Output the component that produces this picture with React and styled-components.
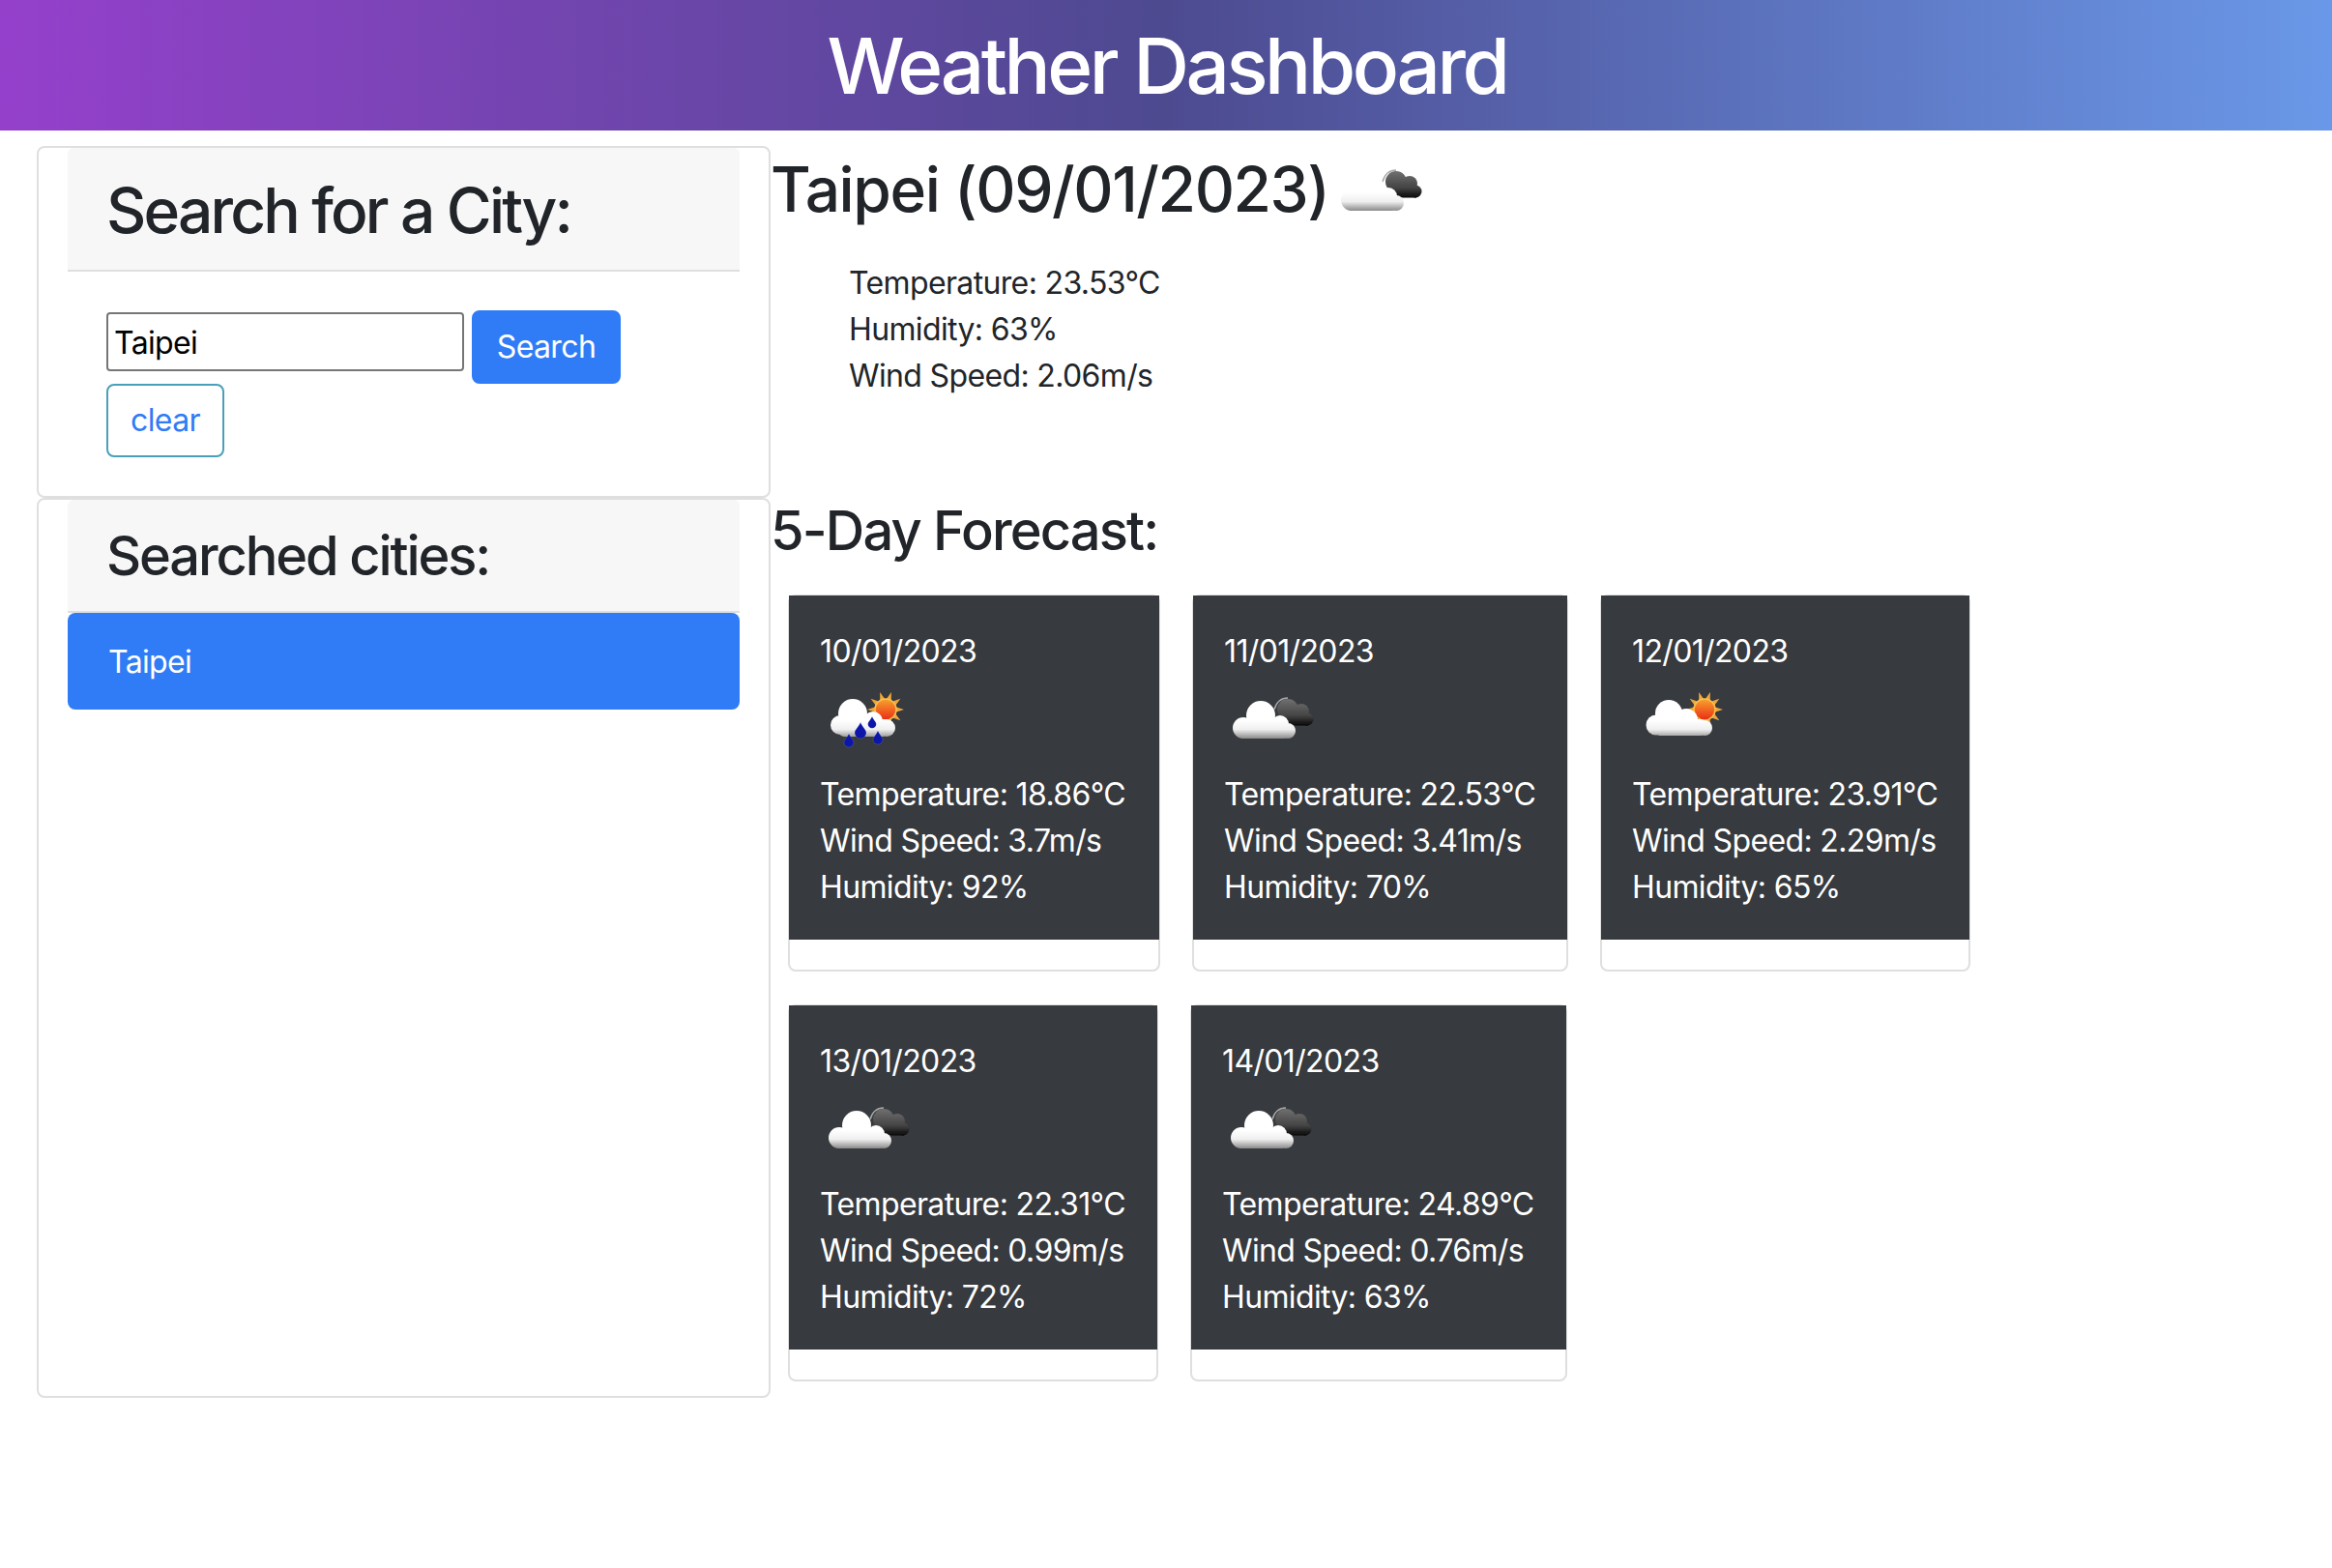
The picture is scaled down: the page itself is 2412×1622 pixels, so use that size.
import React from 'react'
import styled, { createGlobalStyle } from 'styled-components'

const FORECAST = [
  { date: '10/01/2023', icon: 'rain', temp: '18.86', wind: '3.7', humidity: 92, width: 385 },
  { date: '11/01/2023', icon: 'broken', temp: '22.53', wind: '3.41', humidity: 70, width: 389 },
  { date: '12/01/2023', icon: 'sun', temp: '23.91', wind: '2.29', humidity: 65, width: 383 },
  { date: '13/01/2023', icon: 'broken', temp: '22.31', wind: '0.99', humidity: 72, width: 383 },
  { date: '14/01/2023', icon: 'broken', temp: '24.89', wind: '0.76', humidity: 63, width: 390 },
]

const GlobalStyle = createGlobalStyle`
  * { box-sizing: border-box; }
  body {
    margin: 0;
    background: #ffffff;
    color: #212529;
    font-family: Inter, "Liberation Sans", sans-serif;
    font-size: 32px;
    line-height: 48px;
    letter-spacing: -0.02em;
  }
`

const Banner = styled.header`
  height: 135px;
  display: flex;
  align-items: center;
  justify-content: center;
  background: linear-gradient(to right, #9540cc 0%, #4d4a90 50%, #6a98e8 100%);
`

const BannerTitle = styled.h1`
  margin: 0 0 0 2px;
  font-size: 80px;
  line-height: 96px;
  font-weight: 500;
  letter-spacing: -0.043em;
  color: #ffffff;
`

const Layout = styled.main`
  display: flex;
  align-items: flex-start;
`

const Sidebar = styled.aside`
  width: 759px;
  margin: 16px 0 0 38px;
  flex-shrink: 0;
`

const Panel = styled.section`
  border: 2px solid #dfdfdf;
  border-radius: 8px;
  padding: 0 30px;
  min-height: ${({ $minHeight }) => $minHeight || 0}px;
`

const PanelHead = styled.div`
  background: #f7f7f7;
  border-bottom: 2px solid #dfdfdf;
  border-radius: 6px 6px 0 0;
  padding: ${({ $pad }) => $pad}px 40px 0;
  height: ${({ $height }) => $height}px;
`

const PanelTitle = styled.h2`
  margin: 0;
  font-size: ${({ $size }) => $size}px;
  line-height: 1.2;
  font-weight: 550;
  letter-spacing: ${({ $spacing }) => $spacing}em;
`

const SearchForm = styled.form`
  padding: 40px;
`

const CityInput = styled.input`
  width: 370px;
  height: 61px;
  padding: 4px 6px 2px;
  border: 2px solid #767676;
  border-radius: 4px;
  background: #ffffff;
  color: #000000;
  font: 400 32px Inter, "Liberation Sans", sans-serif;
  letter-spacing: -0.02em;
  vertical-align: 4px;
`

const Button = styled.button`
  height: 76px;
  width: ${({ $outline }) => ($outline ? 122 : 154)}px;
  padding: 12px 0;
  border-radius: 8px;
  border: 2px solid ${({ $outline }) => ($outline ? '#4a9fba' : '#2f7cf6')};
  margin-left: ${({ $outline }) => ($outline ? 0 : 8)}px;
  background: ${({ $outline }) => ($outline ? '#ffffff' : '#2f7cf6')};
  color: ${({ $outline }) => ($outline ? '#2f7cf6' : '#ffffff')};
  font: 400 32px/48px Inter, "Liberation Sans", sans-serif;
  letter-spacing: -0.02em;
`

const CityItem = styled.div`
  height: 100px;
  padding: 27px 42px;
  border-radius: 8px;
  background: #2f7cf6;
  color: #ffffff;
`

const Content = styled.div`
  flex: 1;
  min-width: 0;
  padding-top: 17px;
`

const CityTitle = styled.h2`
  margin: 0 0 17px;
  font-size: 64px;
  line-height: 1.2;
  font-weight: 550;
  letter-spacing: -0.022em;
`

const TitleIcon = styled.span`
  margin-left: -12px;
`

const Stats = styled.ul`
  margin: 0 0 103px;
  padding: 0 0 0 81px;
  list-style: none;
`

const ForecastTitle = styled.h3`
  margin: 0 0 32px;
  font-size: 56px;
  line-height: 1.2;
  font-weight: 550;
  letter-spacing: -0.033em;
`

const ForecastGrid = styled.div`
  display: flex;
  flex-wrap: wrap;
  margin-left: 2px;
`

const ForecastCard = styled.article`
  width: ${({ $width }) => $width}px;
  height: 390px;
  margin: 0 17px 34px 16px;
  border: 2px solid #dfdfdf;
  border-radius: 8px;
  background: #ffffff;
`

const ForecastBody = styled.div`
  height: 356px;
  margin: -1px -1px 0;
  padding: 34px 32px 0;
  background: #373a3e;
  color: #ffffff;
  white-space: nowrap;
`

const Icon = styled.svg`
  display: ${({ $inline }) => ($inline ? 'inline-block' : 'block')};
  vertical-align: middle;
  width: 100px;
  height: 100px;
`

const rays = Array.from({ length: 10 }, (_, i) => (i * Math.PI) / 5)

const Defs = () => (
  <defs>
    <linearGradient id="whiteCloud" gradientUnits="userSpaceOnUse" x1="0" y1="47" x2="0" y2="66">
      <stop offset="0" stopColor="#ffffff" />
      <stop offset="0.5" stopColor="#efefef" />
      <stop offset="1" stopColor="#8a8a8a" />
    </linearGradient>
    <linearGradient id="darkCloud" gradientUnits="userSpaceOnUse" x1="0" y1="26" x2="0" y2="53">
      <stop offset="0" stopColor="#6e6e6e" />
      <stop offset="0.6" stopColor="#444444" />
      <stop offset="1" stopColor="#050505" />
    </linearGradient>
    <linearGradient id="sunFill" x1="0" y1="0" x2="0" y2="1">
      <stop offset="0" stopColor="#f8a32c" />
      <stop offset="1" stopColor="#e92b17" />
    </linearGradient>
    <filter id="soft" x="-20%" y="-20%" width="140%" height="140%">
      <feGaussianBlur stdDeviation="0.7" />
    </filter>
  </defs>
)

const Sun = ({ cx, cy }) => (
  <g>
    {rays.map((a) => (
      <polygon
        key={a}
        fill="#f0a63c"
        points={`${cx + Math.cos(a) * 19},${cy + Math.sin(a) * 19} ${cx + Math.cos(a + 0.3) * 10},${cy + Math.sin(a + 0.3) * 10} ${cx + Math.cos(a - 0.3) * 10},${cy + Math.sin(a - 0.3) * 10}`}
      />
    ))}
    <circle cx={cx} cy={cy} r="11" fill="url(#sunFill)" stroke="#f7c04d" strokeWidth="1.5" />
  </g>
)

const Drop = ({ x, y, r }) => (
  <path
    fill="#0718a8"
    stroke="#ffffff"
    strokeOpacity="0.25"
    strokeWidth="0.5"
    d={`M${x} ${y - r * 1.8} C${x + r * 0.4} ${y - r * 0.9} ${x + r} ${y - r * 0.5} ${x + r} ${y} A${r} ${r} 0 0 1 ${x - r} ${y} C${x - r} ${y - r * 0.5} ${x - r * 0.4} ${y - r * 0.9} ${x} ${y - r * 1.8}Z`}
  />
)

const WeatherIcon = ({ kind, inline }) => (
  <Icon $inline={inline} viewBox="0 0 100 100" role="img" aria-label={kind}>
    <Defs />
    {kind === 'broken' && (
      <g filter="url(#soft)">
        <path d="M52 36 C54 29 59 24 66 24" fill="none" stroke="#a8a8a8" strokeWidth="1.5" />
        <g fill="url(#darkCloud)">
          <circle cx="66" cy="36" r="11" />
          <circle cx="80" cy="38" r="8" />
          <circle cx="86" cy="46" r="6.5" />
          <rect x="60" y="42" width="27" height="10.5" />
        </g>
        <g fill="url(#whiteCloud)">
          <circle cx="38" cy="42" r="15" />
          <circle cx="20" cy="55" r="11" />
          <circle cx="58" cy="51" r="9" />
          <circle cx="66" cy="58" r="8" />
          <rect x="14" y="50" width="54" height="16" rx="6" />
        </g>
      </g>
    )}
    {kind === 'sun' && (
      <g filter="url(#soft)">
        <Sun cx={75} cy={36} />
        <g fill="url(#whiteCloud)">
          <circle cx="38" cy="40" r="14" />
          <circle cx="25" cy="52" r="10.5" />
          <circle cx="56" cy="47" r="12" />
          <circle cx="75" cy="55" r="8" />
          <rect x="24" y="46" width="52" height="17" rx="5" />
        </g>
      </g>
    )}
    {kind === 'rain' && (
      <g filter="url(#soft)">
        <Sun cx={68} cy={36} />
        <g fill="url(#whiteCloud)">
          <circle cx="34" cy="40" r="15" />
          <circle cx="21" cy="52" r="10" />
          <circle cx="55" cy="48" r="10" />
          <circle cx="69" cy="55" r="9" />
          <rect x="20" y="46" width="50" height="18" rx="5" />
        </g>
        <Drop x={42} y={60} r={6} />
        <Drop x={54} y={51} r={4.3} />
        <Drop x={30} y={70} r={5} />
        <Drop x={60} y={67} r={5} />
      </g>
    )}
  </Icon>
)

export default function App() {
  return (
    <>
      <GlobalStyle />
      <Banner>
        <BannerTitle>Weather Dashboard</BannerTitle>
      </Banner>
      <Layout>
        <Sidebar>
          <Panel>
            <PanelHead $pad={27} $height={128}>
              <PanelTitle $size={64} $spacing={-0.044}>Search for a City:</PanelTitle>
            </PanelHead>
            <SearchForm>
              <CityInput defaultValue="Taipei" />
              <Button type="button">Search</Button>
              <Button type="button" $outline>clear</Button>
            </SearchForm>
          </Panel>
          <Panel $minHeight={931}>
            <PanelHead $pad={25} $height={117}>
              <PanelTitle $size={56} $spacing={-0.038}>Searched cities:</PanelTitle>
            </PanelHead>
            <CityItem>Taipei</CityItem>
          </Panel>
        </Sidebar>
        <Content>
          <CityTitle>
            Taipei (09/01/2023){' '}
            <TitleIcon>
              <WeatherIcon kind="broken" inline />
            </TitleIcon>
          </CityTitle>
          <Stats>
            <li>Temperature: 23.53°C</li>
            <li>Humidity: 63%</li>
            <li>Wind Speed: 2.06m/s</li>
          </Stats>
          <ForecastTitle>5-Day Forecast:</ForecastTitle>
          <ForecastGrid>
            {FORECAST.map((day) => (
              <ForecastCard key={day.date} $width={day.width}>
                <ForecastBody>
                  <div>{day.date}</div>
                  <WeatherIcon kind={day.icon} />
                  <div>Temperature: {day.temp}°C</div>
                  <div>Wind Speed: {day.wind}m/s</div>
                  <div>Humidity: {day.humidity}%</div>
                </ForecastBody>
              </ForecastCard>
            ))}
          </ForecastGrid>
        </Content>
      </Layout>
    </>
  )
}
